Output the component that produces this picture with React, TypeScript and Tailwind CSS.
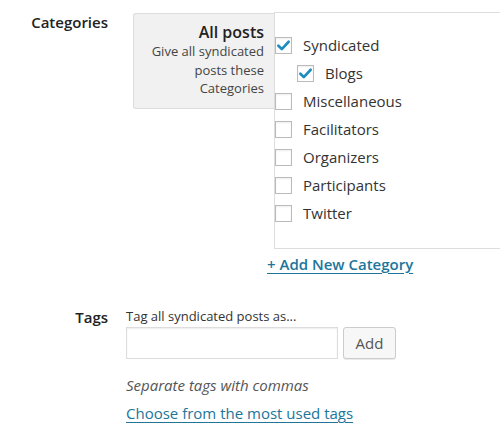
const categories = [
  { name: "Syndicated", checked: true, child: false },
  { name: "Blogs", checked: true, child: true },
  { name: "Miscellaneous", checked: false, child: false },
  { name: "Facilitators", checked: false, child: false },
  { name: "Organizers", checked: false, child: false },
  { name: "Participants", checked: false, child: false },
  { name: "Twitter", checked: false, child: false },
];

function Checkbox({ checked }: { checked: boolean }) {
  return (
    <span className="flex h-[17px] w-[17px] flex-none items-center justify-center border border-[#bbb] bg-white shadow-[inset_0_1px_2px_rgba(0,0,0,0.07)]">
      {checked && (
        <svg viewBox="0 0 16 16" className="h-[15px] w-[15px]">
          <path d="M2.5 8.2 L6.2 11.8 L13.5 4" fill="none" stroke="#1e8cbe" strokeWidth="2.8" strokeLinecap="round" strokeLinejoin="round" />
        </svg>
      )}
    </span>
  );
}

export default function App() {
  return (
    <div className="h-[437px] w-[500px] overflow-hidden bg-white font-['Open_Sans','Liberation_Sans',sans-serif] text-[#333]">
      <div className="flex pt-[12px]">
        <div className="w-[108px] flex-none text-right text-[15px] font-semibold leading-[20px] text-[#222]">
          Categories
        </div>
        <div className="ml-[25px] flex flex-col">
          <div className="flex">
            <div className="mt-[1px] h-[96px] w-[141px] flex-none rounded-l-[3px] border border-r-0 border-[#ddd] bg-[#f1f1f1] pr-[10px] pt-[8px] text-right">
              <div className="text-[16px] font-semibold leading-[20px] text-[#222]">All posts</div>
              <div className="text-[13px] leading-[18.5px] text-[#444]">
                Give all syndicated
                <br />
                posts these
                <br />
                Categories
              </div>
            </div>
            <div className="h-[237px] w-[240px] flex-none border border-[#ddd] bg-white pt-[18px]">
              {categories.map((c) => (
                <label
                  key={c.name}
                  className={`flex h-[28px] items-center gap-[11px] text-[15px] text-[#333] ${c.child ? "ml-[22px]" : ""}`}
                >
                  <Checkbox checked={c.checked} />
                  <span>{c.name}</span>
                </label>
              ))}
            </div>
          </div>
          <a
            href="#"
            className="ml-[134px] mt-[5px] text-[15px] font-semibold leading-[20px] text-[#21759b] underline underline-offset-[3px]"
          >
            + Add New Category
          </a>
        </div>
      </div>

      <div className="mt-[33px] flex">
        <div className="w-[108px] flex-none text-right text-[15px] font-semibold leading-[20px] text-[#222]">
          Tags
        </div>
        <div className="ml-[18px] flex flex-col">
          <div className="pt-[1px] text-[13px] leading-[16px] text-[#333]">Tag all syndicated posts as...</div>
          <div className="mt-[3px] flex items-center gap-[5px]">
            <input
              type="text"
              className="h-[32px] w-[212px] border border-[#ddd] bg-white shadow-[inset_0_1px_2px_rgba(0,0,0,0.07)] outline-none"
            />
            <button className="h-[32px] w-[53px] rounded-[3px] border border-[#ccc] bg-[#f7f7f7] text-[15px] text-[#555] shadow-[0_1px_0_rgba(0,0,0,0.08)]">
              Add
            </button>
          </div>
          <p className="mt-[16px] text-[15px] italic leading-[20px] text-[#555]">Separate tags with commas</p>
          <a href="#" className="mt-[8px] text-[15px] leading-[20px] text-[#21759b] underline underline-offset-[3px]">
            Choose from the most used tags
          </a>
        </div>
      </div>
    </div>
  );
}
